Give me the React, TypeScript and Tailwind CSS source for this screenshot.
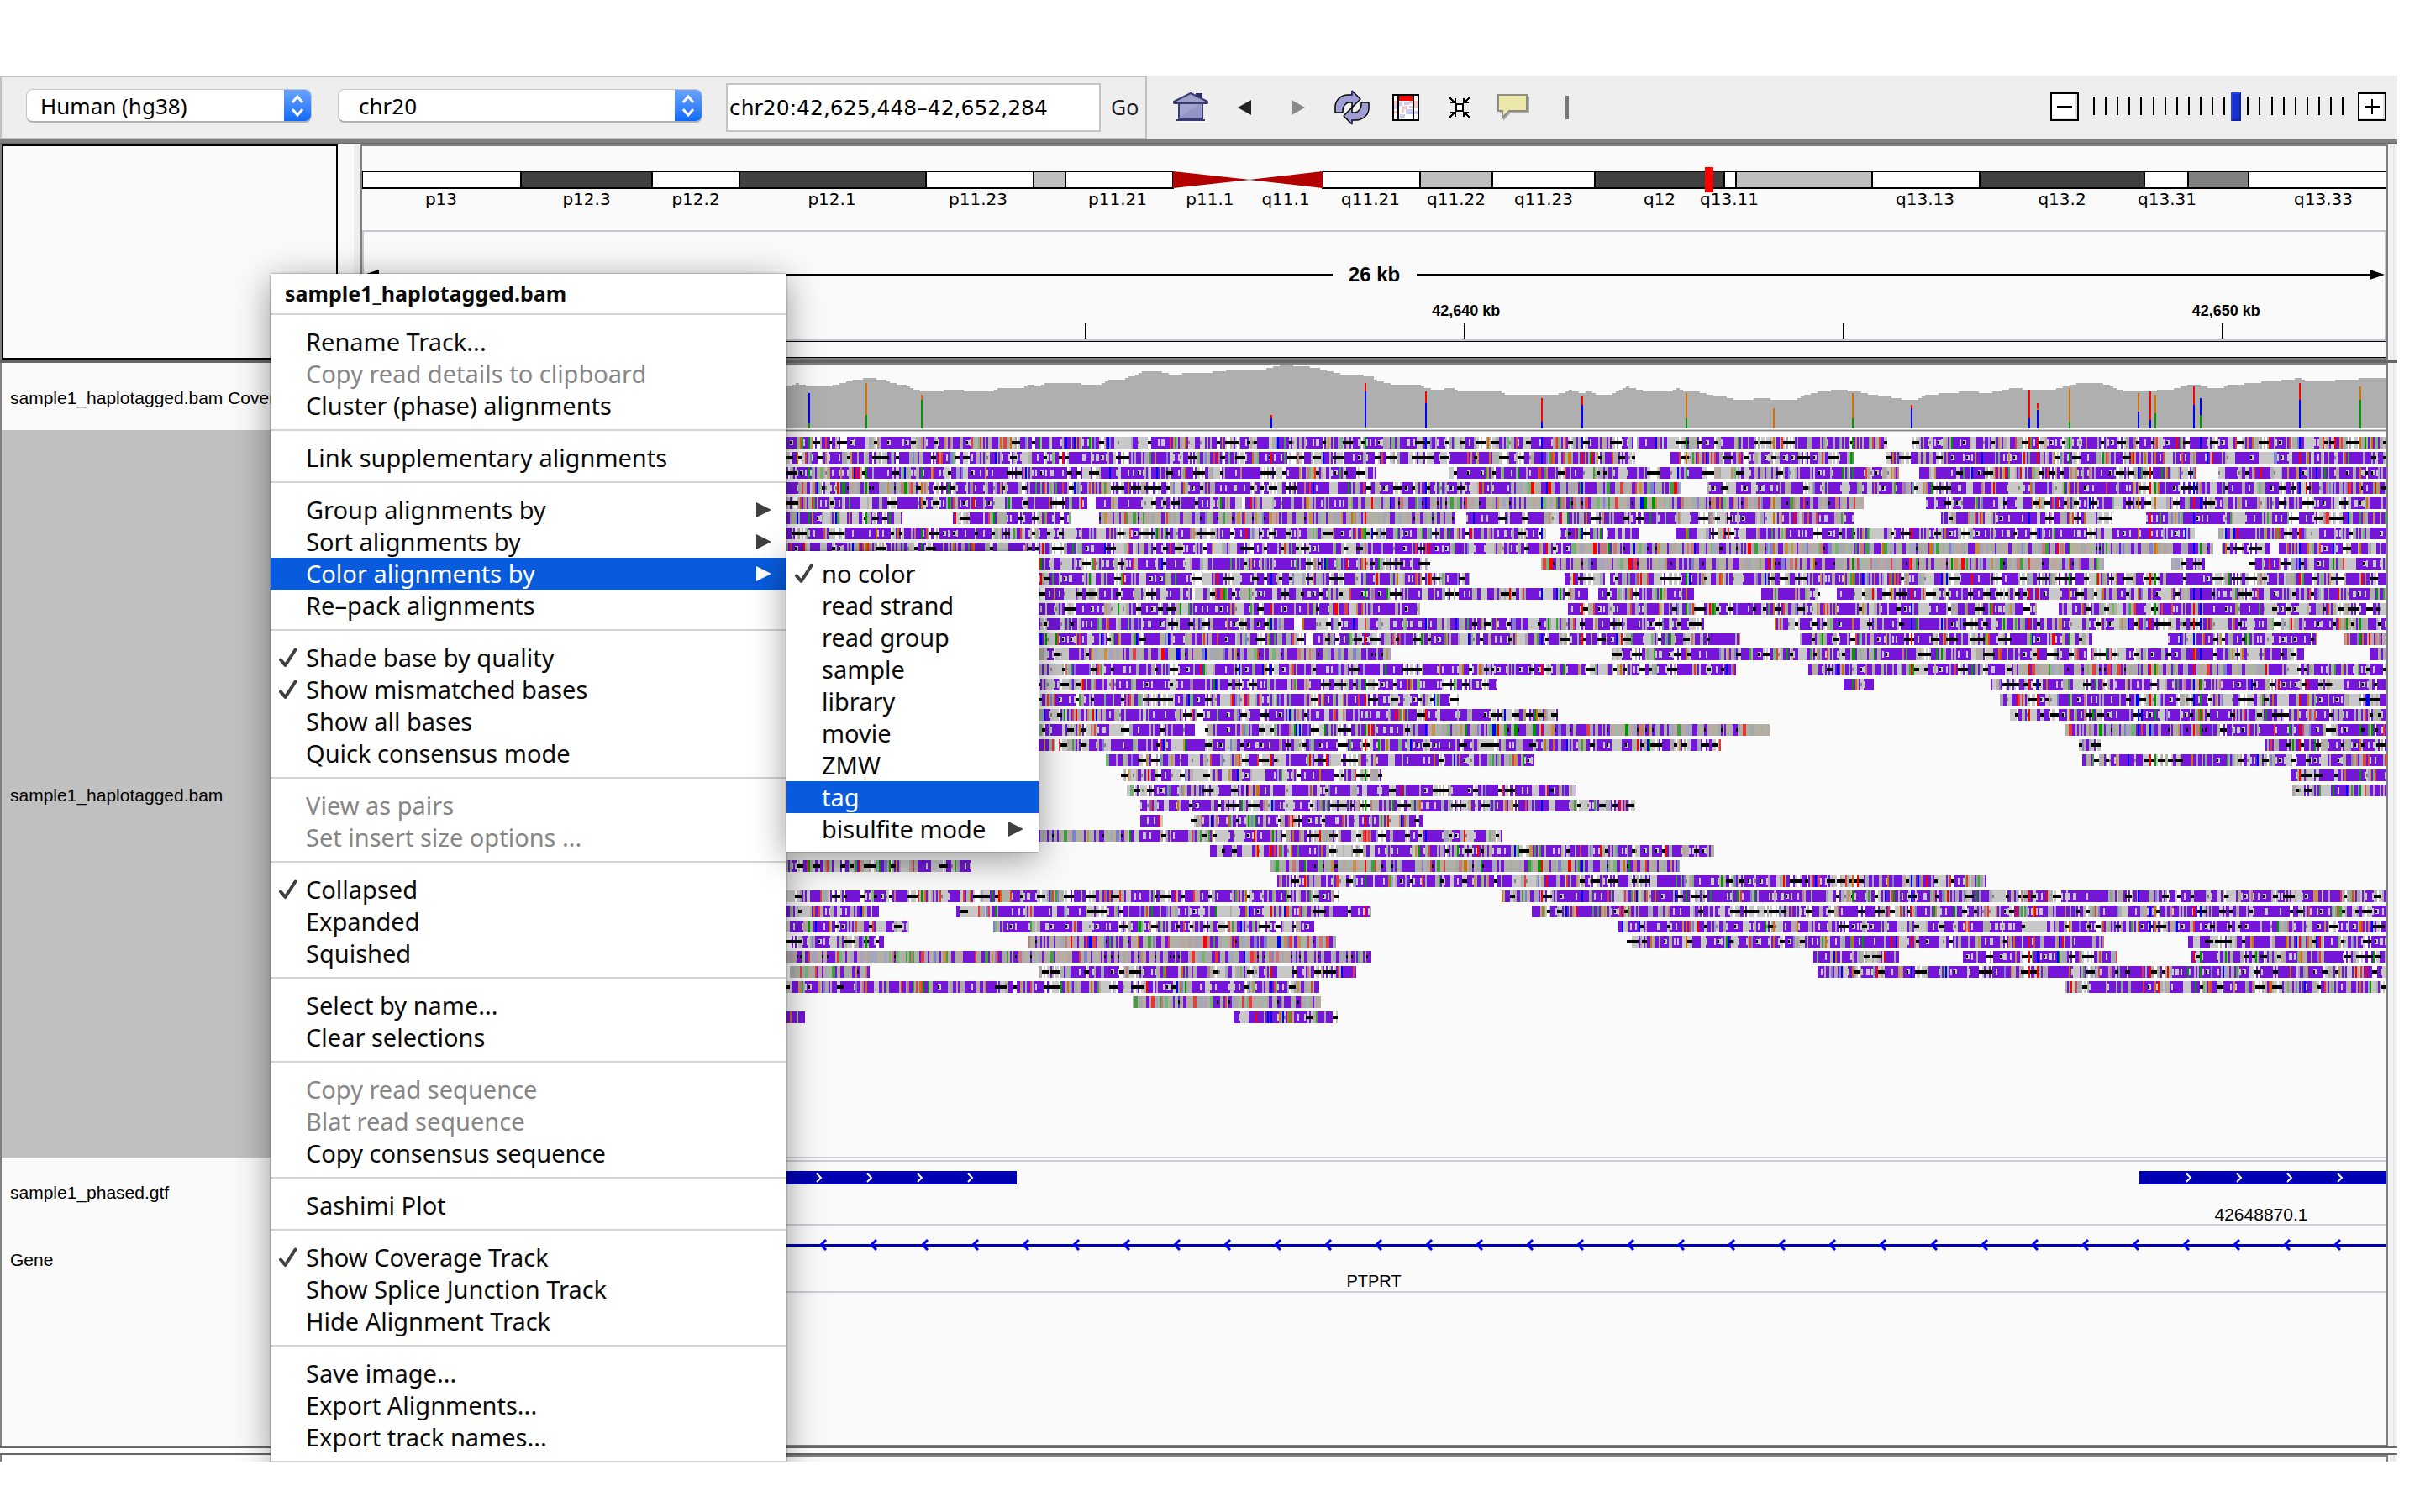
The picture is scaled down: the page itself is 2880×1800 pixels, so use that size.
import React from "react";

/* ---------- genome data ---------- */

const X0 = 431;
const SPAN = 2409;
const pct = (x: number) => `${((x - X0) / SPAN) * 100}%`;

const BANDS: [number, number, string][] = [
  [431, 620, "#fff"], [620, 776, "#404040"], [776, 880, "#fff"], [880, 1102, "#404040"],
  [1102, 1230, "#fff"], [1230, 1268, "#bfbfbf"], [1268, 1396, "#fff"],
  [1574, 1690, "#fff"], [1690, 1776, "#bfbfbf"], [1776, 1898, "#fff"], [1898, 2052, "#404040"],
  [2052, 2066, "#fff"], [2066, 2228, "#bfbfbf"], [2228, 2356, "#fff"], [2356, 2552, "#404040"],
  [2552, 2604, "#fff"], [2604, 2676, "#808080"], [2676, 2842, "#fff"],
];

const BAND_LABELS: [string, number][] = [
  ["p13", 525], ["p12.3", 698], ["p12.2", 828], ["p12.1", 990], ["p11.23", 1164], ["p11.21", 1330],
  ["p11.1", 1440], ["q11.1", 1530], ["q11.21", 1631], ["q11.22", 1733], ["q11.23", 1837], ["q12", 1975],
  ["q13.11", 2058], ["q13.13", 2291], ["q13.2", 2454], ["q13.31", 2579], ["q13.33", 2765],
];

const COVERAGE: [number, number][] = [
  [431, 462], [936, 460], [948, 456], [958, 460], [984, 460], [1004, 455], [1016, 452], [1036, 450],
  [1052, 453], [1060, 456], [1076, 459], [1087, 464], [1102, 466], [1140, 464], [1152, 466], [1180, 466],
  [1184, 462], [1216, 461], [1225, 458], [1232, 460], [1250, 455], [1276, 455], [1288, 458], [1306, 458],
  [1316, 453], [1332, 452], [1342, 449], [1350, 447], [1360, 442], [1380, 443], [1392, 446], [1418, 444],
  [1440, 443], [1464, 440], [1480, 439], [1500, 440], [1512, 437], [1524, 434], [1550, 436], [1565, 438],
  [1580, 442], [1594, 445], [1612, 446], [1632, 448], [1636, 452], [1644, 455], [1656, 458], [1690, 459],
  [1702, 464], [1730, 462], [1734, 466], [1786, 467], [1790, 470], [1820, 469], [1850, 470], [1862, 466],
  [1868, 464], [1880, 468], [1890, 466], [1902, 470], [1915, 470], [1925, 464], [1935, 460], [1945, 463],
  [1960, 466], [1990, 465], [1996, 462], [2000, 465], [2020, 466], [2030, 470], [2048, 472], [2066, 476],
  [2100, 474], [2110, 476], [2135, 476], [2142, 472], [2160, 467], [2188, 464], [2208, 466], [2225, 470],
  [2240, 472], [2262, 475], [2280, 475], [2290, 471], [2315, 468], [2340, 466], [2366, 468], [2380, 465],
  [2396, 462], [2418, 464], [2440, 464], [2460, 459], [2476, 455], [2500, 456], [2515, 462], [2530, 466],
  [2555, 466], [2585, 463], [2600, 459], [2612, 457], [2625, 461], [2640, 463], [2650, 459], [2680, 456],
  [2700, 454], [2728, 452], [2732, 450], [2750, 455], [2765, 454], [2790, 452], [2820, 450], [2840, 450],
];

const R = "#ff0000";
const B = "#0000ff";
const O = "#d17105";
const G = "#009600";

/* x, then stacked [top, colour] pieces down to the baseline */
const SNPS: [number, [number, string][]][] = [
  [963, [[468, B], [504, G]]], [1031, [[456, O], [494, G]]], [1097, [[470, O], [476, G]]],
  [1513, [[494, R], [498, B]]], [1625, [[456, R], [466, B], [508, G]]], [1697, [[466, R], [480, B]]],
  [1835, [[474, R], [502, B]]], [1883, [[472, R], [482, B]]], [2007, [[468, O], [498, G]]],
  [2111, [[486, O]]], [2205, [[468, O], [498, G]]], [2275, [[482, R], [486, B]]],
  [2415, [[464, R], [498, B]]], [2425, [[480, R], [486, O], [488, B]]], [2463, [[462, O], [502, G]]],
  [2545, [[468, O], [490, B]]], [2559, [[466, R], [500, B]]], [2565, [[470, O], [492, G]]],
  [2611, [[460, R], [482, B]]], [2619, [[474, B], [494, G]]], [2737, [[456, R], [476, B]]],
  [2809, [[460, O], [476, G]]],
];

/* reads per packed row: [start, end, muted?] */
type Seg = [number, number, 1?];
const ROWS: Seg[][] = [
  [[936, 1944], [1948, 2246], [2276, 2840]],
  [[936, 1946], [1988, 2206], [2244, 2840]],
  [[936, 1638], [1724, 2260], [2284, 2614], [2640, 2840]],
  [[936, 1000], [1000, 1090, 1], [1090, 1800], [1800, 2000, 1], [2032, 2840]],
  [[936, 1294], [1304, 1478], [1482, 1600], [1600, 2218, 1], [2292, 2840]],
  [[936, 1074], [1134, 1274], [1308, 1732, 1], [1745, 2206], [2310, 2514], [2554, 2840]],
  [[936, 1840], [1856, 1908], [1912, 1950], [1994, 2612], [2640, 2840]],
  [[936, 1872], [1872, 2634, 1], [2644, 2702], [2712, 2840]],
  [[936, 1702], [1834, 2504, 1], [2584, 2624], [2676, 2840]],
  [[936, 1749], [1862, 1910], [1916, 2840]],
  [[936, 1418], [1422, 1890], [1902, 2016], [2096, 2166], [2186, 2840]],
  [[936, 1690], [1866, 2424], [2450, 2840]],
  [[936, 1540], [1550, 2028], [2112, 2840]],
  [[936, 1553], [1563, 2070], [2142, 2490], [2580, 2757], [2789, 2840]],
  [[936, 1300], [1300, 1656, 1], [1918, 2484], [2488, 2742], [2820, 2840]],
  [[936, 2066], [2152, 2400], [2400, 2700, 1], [2700, 2840]],
  [[936, 1782], [2194, 2230], [2369, 2840]],
  [[936, 1736], [2380, 2840]],
  [[936, 1854], [2392, 2840]],
  [[936, 1422], [1434, 1700], [1700, 2106, 1], [2458, 2640, 1], [2640, 2840]],
  [[936, 1256], [1260, 2048], [2474, 2500], [2696, 2840]],
  [[1316, 1826], [2478, 2840]],
  [[1334, 1645], [2726, 2840]],
  [[1341, 1876], [2728, 2840]],
  [[1357, 1946]],
  [[1357, 1384], [1417, 1694]],
  [[936, 1340, 1], [1340, 1788]],
  [[1440, 2040]],
  [[936, 1156], [1512, 1999, 1]],
  [[1520, 2364]],
  [[936, 1594], [1787, 2840]],
  [[936, 1046], [1138, 1632], [1823, 2840]],
  [[936, 1082], [1182, 1564], [1926, 2840]],
  [[936, 1052], [1224, 1590, 1], [1936, 2504], [2604, 2840]],
  [[936, 1632, 1], [2158, 2260], [2336, 2520], [2608, 2840]],
  [[940, 1035, 1], [1236, 1614], [2163, 2840]],
  [[936, 1570], [2458, 2840]],
  [[1348, 1572, 1]],
  [[936, 958], [1468, 1592]],
];

const ROW_TOP = 520;
const ROW_STEP = 18;
const ROW_H = 14;

const PURPLE = "#7415d8";
const GRAY = "#c8c8c8";
const SOFT = ["#a8b5a6", "#bba5a5", "#a5a5bf", "#b8aea0", "#b0b0a8", "#a8a8a8"];
const MID = ["#c87878", "#78b478", "#8080d0", "#c88f4a", "#e04040", "#40a040"];
const HOT = [R, G, B, O, "#ee3333"];

function buildReads(): [string, string][] {
  let s = 20426;
  const rnd = () => {
    s = (s * 1664525 + 1013904223) % 4294967296;
    return s / 4294967296;
  };
  const pick = (a: string[]) => a[Math.floor(rnd() * a.length)];
  const under: Record<string, string> = {};
  const over: Record<string, string> = {};
  const put = (m: Record<string, string>, c: string, x: number, y: number, w: number, h: number) => {
    m[c] = (m[c] || "") + `M${x} ${y}h${w}v${h}h${-w}z`;
  };
  ROWS.forEach((segs, r) => {
    const y = ROW_TOP + r * ROW_STEP;
    segs.forEach(([a, b, muted]) => {
      let x = a;
      while (x < b) {
        const k = rnd();
        const left = b - x;
        if (muted) {
          const w = Math.min(left, k < 0.6 ? 2 : 4);
          const q = rnd();
          put(under, q < 0.28 ? PURPLE : q < 0.84 ? pick(SOFT) : q < 0.97 ? pick(MID) : pick(HOT), x, y, w, ROW_H);
          if (q < 0.06) put(over, "#000", x, y + 5, 2, 4);
          x += w;
          continue;
        }
        if (k < 0.32) {
          const w = Math.min(left, 4 + 2 * Math.floor(rnd() * rnd() * 7));
          put(under, PURPLE, x, y, w, ROW_H);
          if (w >= 6) {
            if (rnd() < 0.5) put(over, GRAY, x, y + 3, 2, 8);
            if (rnd() < 0.5) put(over, GRAY, x + w - 2, y + 3, 2, 8);
          }
          if (w >= 10 && rnd() < 0.5) {
            const c = x + 4;
            put(over, GRAY, c, y + 4, 4, 6);
            put(over, "#000", c, y + 5, 2, 4);
          }
          x += w;
        } else if (k < 0.48) {
          const w = Math.min(left, 4 + 2 * Math.floor(rnd() * rnd() * 7));
          for (let i = 0; i < w; i += 2) {
            const q = rnd();
            put(under, q < 0.4 ? GRAY : q < 0.55 ? PURPLE : q < 0.65 ? pick(SOFT) : "#ffffff", x + i, y, 2, ROW_H);
          }
          put(over, "#000", x, y + 5, w, 4);
          x += w;
        } else if (k < 0.59) {
          const w = Math.min(left, 2 + 2 * Math.floor(rnd() * rnd() * 7));
          put(under, GRAY, x, y, w, ROW_H);
          if (rnd() < 0.3) put(over, "#808080", x, y + 5, 2, 4);
          x += w;
        } else {
          const n = 1 + Math.floor(rnd() * 4);
          for (let i = 0; i < n && x < b; i++) {
            const q = rnd();
            put(under, q < 0.36 ? PURPLE : q < 0.76 ? pick(SOFT) : q < 0.92 ? pick(MID) : pick(HOT), x, y, 2, ROW_H);
            x += 2;
          }
        }
      }
      SNPS.forEach(([sx, parts]) => {
        if (sx > a + 2 && sx < b - 2 && rnd() < 0.45) {
          put(over, parts[rnd() < 0.5 ? 0 : parts.length - 1][1], sx - 1, y, 2, ROW_H);
        }
      });
    });
  });
  return [...Object.entries(under), ...Object.entries(over)];
}

const READS = buildReads();

function coveragePath() {
  let d = `M431 510`;
  let i = 0;
  for (let x = 431; x < 2840; x += 4) {
    while (i < COVERAGE.length - 2 && COVERAGE[i + 1][0] <= x) i++;
    const [xa, ya] = COVERAGE[i];
    const [xb, yb] = COVERAGE[i + 1];
    const t = Math.min(1, Math.max(0, (x - xa) / (xb - xa)));
    const yy = 2 * Math.round((ya + (yb - ya) * t) / 2);
    d += `V${yy}H${Math.min(2840, x + 4)}`;
  }
  return d + "V510Z";
}

const series = (from: number, to: number, step: number) => {
  const out: number[] = [];
  for (let x = from; x <= to; x += step) out.push(x);
  return out;
};

/* ---------- icons ---------- */

function HomeIcon() {
  return (
    <svg width="44" height="38" viewBox="0 0 44 38" aria-hidden="true">
      <path d="M28 2h8v12l-8-5z" fill="#2d2d66" />
      <path d="M8 14h28v18H8z" fill="#a3a3cf" stroke="#3a3a74" strokeWidth="2" />
      <path d="M10 30 34 14v18H10z" fill="#8a8abb" opacity=".5" />
      <path d="M2 12 22 2l20 10v2H2z" fill="#a0a0cc" stroke="#3a3a74" strokeWidth="2" strokeLinejoin="bevel" />
      <path d="M5 34h34" stroke="#3a3a74" strokeWidth="2" />
      <path d="M7 36.500h36" stroke="#fff" strokeWidth="1" />
    </svg>
  );
}

function RefreshIcon() {
  const half =
    "M1 27V19C2 11 9 6 16 6h5V1l10 10-10 10v-6h-4c-4 1-7 5-7 9v3z";
  return (
    <svg width="42" height="42" viewBox="0 0 42 42" aria-hidden="true">
      <g fill="#9f9fd6" stroke="#000" strokeWidth="1.500" strokeLinejoin="bevel">
        <path d={half} />
        <path d={half} transform="rotate(180 21 21)" />
      </g>
      <path d="M21 1v6M21 35v6" stroke="#2d2d7a" strokeWidth="2" />
    </svg>
  );
}

function RegionIcon() {
  return (
    <svg width="32" height="32" viewBox="0 0 32 32" shapeRendering="crispEdges" aria-hidden="true">
      <path d="M1 1h30v30H1z" fill="#fff" />
      <path d="M2 8h4v6H2zM12 14h6v4h-4v4h-3zM20 8h4v4h-4zM26 8h4v8h-4zM2 20h4v3H2z" fill="#f7c8c8" />
      <path d="M8 10h4v4H8zM14 10h6v3h-6zM16 18h8v6h-8zM2 14h4v4H2zM26 20h4v4h-4zM9 24h6v4H9zM20 14h4v3h-4z" fill="#c8ccf5" />
      <path d="M8 2h16v6H8z" fill="#f00" />
      <path d="M1 1h30v30H1zM7 1v30M25 1v30" fill="none" stroke="#000" strokeWidth="2" />
    </svg>
  );
}

function FitIcon() {
  return (
    <svg width="26" height="26" viewBox="0 0 26 26" shapeRendering="crispEdges" aria-hidden="true">
      <path d="M9 9h8v8H9z" fill="#fff" stroke="#000" strokeWidth="2" />
      <path
        d="M0 0l7 7M26 0l-7 7M0 26l7-7M26 26l-7-7M2 7h6V2M24 7h-6V2M2 19h6v5M24 19h-6v5"
        fill="none"
        stroke="#000"
        strokeWidth="2"
      />
    </svg>
  );
}

function BubbleIcon() {
  return (
    <svg width="38" height="32" viewBox="0 0 38 32" aria-hidden="true">
      <path d="M3 3h35v19H16L7 32V22H3z" fill="#aaa" />
      <path d="M1 1h34v19H14l-8 8v-8H1z" fill="#ebe7a9" stroke="#8c8c82" strokeWidth="2" />
    </svg>
  );
}

function Check() {
  return (
    <svg width="22" height="24" viewBox="0 0 22 24" aria-hidden="true">
      <path d="M2 14.500 7.500 21 19.500 2.500" fill="none" stroke="#404040" strokeWidth="4" strokeLinecap="round" strokeLinejoin="round" />
    </svg>
  );
}

function SubArrow() {
  return (
    <svg width="18" height="20" viewBox="0 0 18 20" aria-hidden="true">
      <path d="M0 1v18l18-9z" fill="currentColor" />
    </svg>
  );
}

/* ---------- toolbar ---------- */

function Picker({ label, value, className, inset }: { label: string; value: string; className: string; inset: string }) {
  return (
    <div className={`relative mb-1 h-10 shrink-0 overflow-hidden rounded-lg border border-b-2 border-[#c6c6c6] border-b-[#b0b0b0] bg-white ${className}`}>
      <select aria-label={label} className={`h-full w-full appearance-none bg-transparent text-[26px] leading-9 text-black outline-none ${inset}`}>
        <option>{value}</option>
      </select>
      <span className="pointer-events-none absolute -inset-y-px right-0 flex w-8 items-center justify-center bg-gradient-to-b from-[#6ba5fb] to-[#0468fd]">
        <svg width="16" height="26" viewBox="0 0 16 26" aria-hidden="true">
          <path d="M2 9l6-7 6 7M2 17l6 7 6-7" fill="none" stroke="#fff" strokeWidth="3" />
        </svg>
      </span>
    </div>
  );
}

function Slot({ label, children }: { label: string; children: React.ReactNode }) {
  return (
    <button type="button" aria-label={label} className="flex h-full w-16 items-center justify-center">
      {children}
    </button>
  );
}

function Toolbar() {
  return (
    <header className="flex h-[76px] shrink-0 items-stretch bg-[#eeeeee]">
      <form className="flex items-center border-2 border-[#c0c0c0] pl-[29px] pr-2" onSubmit={(e) => e.preventDefault()}>
        <Picker label="Genome" value="Human (hg38)" className="w-[340px]" inset="pl-4" />
        <Picker label="Chromosome" value="chr20" className="ml-[31px] w-[434px]" inset="pl-6" />
        <input
          aria-label="Locus"
          defaultValue="chr20:42,625,448–42,652,284"
          className="ml-7 h-[58px] w-[446px] border-2 border-[#c4c4c4] bg-white px-0.5 font-['DejaVu_Sans'] text-[25px] text-black outline-none"
        />
        <button type="button" className="ml-3 text-[25px] text-[#222]">Go</button>
      </form>
      <div className="ml-5 flex items-center">
        <Slot label="Home"><HomeIcon /></Slot>
        <Slot label="Back">
          <svg width="16" height="18" viewBox="0 0 16 18"><path d="M16 0v18L0 9z" fill="#222" /></svg>
        </Slot>
        <Slot label="Forward">
          <svg width="16" height="18" viewBox="0 0 16 18"><path d="M0 0v18l16-9z" fill="#888" /></svg>
        </Slot>
        <Slot label="Refresh"><RefreshIcon /></Slot>
        <Slot label="Define region"><RegionIcon /></Slot>
        <Slot label="Fit to window"><FitIcon /></Slot>
        <Slot label="Popup behavior"><BubbleIcon /></Slot>
        <span className="flex w-16 justify-center"><span className="h-7 w-1 bg-[#777]" /></span>
      </div>
      <div className="ml-auto flex items-start gap-3 pr-[13px] pt-5">
        <button type="button" aria-label="Zoom out" className="flex size-[34px] items-center justify-center border-2 border-black bg-white shadow-[inset_-2px_-2px_0_#ddd]">
          <span className="h-0.5 w-[18px] bg-black" />
        </button>
        <div className="relative h-[34px] w-[308px]">
          <svg className="h-full w-full" viewBox="0 0 308 34" preserveAspectRatio="none" shapeRendering="crispEdges" aria-hidden="true">
            {series(0, 21, 1).map((i) => (
              <path key={i} d={`M${6 + Math.round(i * 14.1)} 5v22`} stroke="#000" strokeWidth="2" />
            ))}
          </svg>
          <input
            type="range"
            aria-label="Zoom level"
            min={0}
            max={21}
            defaultValue={12}
            className="absolute inset-0 m-0 h-full w-full appearance-none bg-transparent [&::-webkit-slider-thumb]:h-[34px] [&::-webkit-slider-thumb]:w-3 [&::-webkit-slider-thumb]:appearance-none [&::-webkit-slider-thumb]:border-2 [&::-webkit-slider-thumb]:border-[#2244ee] [&::-webkit-slider-thumb]:border-b-[#1122a0] [&::-webkit-slider-thumb]:border-r-[#1122a0] [&::-webkit-slider-thumb]:bg-[#1a30cc]"
          />
        </div>
        <button type="button" aria-label="Zoom in" className="flex size-[34px] items-center justify-center border-2 border-black bg-white shadow-[inset_-2px_-2px_0_#ddd]">
          <svg width="18" height="18" viewBox="0 0 18 18" aria-hidden="true"><path d="M0 9h18M9 0v18" stroke="#000" strokeWidth="2" /></svg>
        </button>
      </div>
    </header>
  );
}

/* ---------- header panel ---------- */

function Ideogram() {
  return (
    <div className="relative h-[100px]">
      <svg className="h-full w-full" viewBox={`${X0} 174 ${SPAN} 100`} preserveAspectRatio="none" aria-hidden="true">
        <g shapeRendering="crispEdges">
          {BANDS.map(([a, b, c]) => (
            <rect key={a} x={a} y="204" width={b - a} height="20" fill={c} stroke="#000" strokeWidth="2" />
          ))}
        </g>
        <path d="M1396 204l92 10-92 10zM1574 204l-88 10 88 10z" fill="#b20000" />
        <rect x="2029" y="199" width="10" height="30" fill="#f00" />
      </svg>
      {BAND_LABELS.map(([t, x]) => (
        <span key={t} className="absolute top-[51px] -translate-x-1/2 font-['DejaVu_Sans'] text-[20px] leading-6" style={{ left: pct(x) }}>
          {t}
        </span>
      ))}
    </div>
  );
}

function Ruler() {
  return (
    <div className="relative h-[132px] border-2 border-[#c8c8d2] font-['Liberation_Sans'] font-bold">
      <div className="flex h-[102px] items-center">
        <svg width="18" height="12" viewBox="0 0 18 12" className="shrink-0"><path d="M18 0v12L0 6z" /></svg>
        <span className="h-0.5 flex-1 bg-black" />
        <span className="w-[100px] text-center text-[24px] leading-7">26 kb</span>
        <span className="h-0.5 flex-1 bg-black" />
        <svg width="18" height="12" viewBox="0 0 18 12" className="shrink-0"><path d="M0 0v12l18-6z" /></svg>
      </div>
      {[840, 1292, 1744, 2196, 2648].map((x) => (
        <span key={x} className="absolute top-[109px] -ml-0.5 h-[18px] w-0.5 bg-black" style={{ left: pct(x) }} />
      ))}
      {([["42,640 kb", 1745], ["42,650 kb", 2651]] as [string, number][]).map(([t, x]) => (
        <span key={t} className="absolute top-[84px] -translate-x-1/2 text-[18px] leading-5" style={{ left: pct(x) }}>
          {t}
        </span>
      ))}
    </div>
  );
}

function Gutter() {
  return <div className="w-[27px] shrink-0 border-r-8 border-[#eeeeee] bg-[#fafafa]" />;
}

function Edge() {
  return (
    <div className="flex w-[11px] shrink-0 bg-[#f3f3f3]">
      <span className="ml-1.5 w-0.5 bg-[#e6e6e6]" />
    </div>
  );
}

/* ---------- tracks ---------- */

function TrackName({ children, className }: { children: React.ReactNode; className: string }) {
  return (
    <div className={`flex shrink-0 items-center overflow-hidden whitespace-nowrap pl-2.5 pt-1 font-['Liberation_Sans'] text-[21px] leading-6 ${className}`}>
      {children}
    </div>
  );
}

function Tracks() {
  return (
    <div className="min-w-0 flex-1 border-2 border-[#808080] bg-[#fafafa]">
      <svg className="block h-20 w-full" viewBox={`${X0} 434 ${SPAN} 80`} preserveAspectRatio="none" shapeRendering="crispEdges" role="img" aria-label="Coverage">
        <path d={coveragePath()} fill="#afafaf" />
        {SNPS.map(([x, parts]) =>
          parts.map(([top, c], i) => (
            <rect key={`${x}-${i}`} x={x - 1} y={top} width="2" height={(parts[i + 1]?.[0] ?? 510) - top} fill={c} />
          )),
        )}
        <path d="M431 511.500H2840M431 513.500H2840" stroke="#cdcdcd" />
        <path d="M431 512.500H2840" stroke="#808080" />
      </svg>
      <div className="h-[865px] border-b-2 border-[#cdcdd6]">
        <svg className="block h-full w-full" viewBox={`${X0} 514 ${SPAN} 863`} preserveAspectRatio="none" shapeRendering="crispEdges" role="img" aria-label="Alignments">
          {READS.map(([c, d], i) => (
            <path key={i} d={d} fill={c} />
          ))}
        </svg>
      </div>
      <div className="relative mt-0.5 h-[78px] border-y-2 border-[#cdcdd6]">
        <svg className="block h-full w-full" viewBox={`${X0} 1383 ${SPAN} 74`} preserveAspectRatio="none" aria-hidden="true">
          <path d="M431 1394H1210V1410H431zM2546 1394H2840V1410H2546z" fill="#0000b2" />
          {[...series(495, 1195, 60), ...series(2605, 2800, 60)].map((x) => (
            <path key={x} d={`M${x - 3} 1397l5 5-5 5`} fill="none" stroke="#fff" strokeWidth="2" />
          ))}
        </svg>
        <span className="absolute top-[51px] -translate-x-1/2 font-['Liberation_Sans'] text-[21px] leading-6" style={{ left: pct(2691) }}>
          42648870.1
        </span>
      </div>
      <div className="relative h-20 border-b-2 border-[#cdcdd6]">
        <svg className="block h-full w-full" viewBox={`${X0} 1459 ${SPAN} 78`} preserveAspectRatio="none" aria-hidden="true">
          <path d="M431 1482.500H2840" stroke="#0000b2" strokeWidth="3" />
          {series(500, 2830, 60).map((x, i) => (
            <path key={x} d={`M${x + 3 + Math.round(i / 20)} 1476l-6 6 6 6`} fill="none" stroke="#0000ff" strokeWidth="3" />
          ))}
        </svg>
        <span className="absolute top-[54px] -translate-x-1/2 font-['Liberation_Sans'] text-[20px] leading-6" style={{ left: pct(1635) }}>
          PTPRT
        </span>
      </div>
    </div>
  );
}

/* ---------- menus ---------- */

type Entry = { t: string; off?: boolean; check?: boolean; sub?: boolean; on?: boolean };

const MENU: Entry[][] = [
  [{ t: "Rename Track..." }, { t: "Copy read details to clipboard", off: true }, { t: "Cluster (phase) alignments" }],
  [{ t: "Link supplementary alignments" }],
  [
    { t: "Group alignments by", sub: true },
    { t: "Sort alignments by", sub: true },
    { t: "Color alignments by", sub: true, on: true },
    { t: "Re–pack alignments" },
  ],
  [
    { t: "Shade base by quality", check: true },
    { t: "Show mismatched bases", check: true },
    { t: "Show all bases" },
    { t: "Quick consensus mode" },
  ],
  [{ t: "View as pairs", off: true }, { t: "Set insert size options ...", off: true }],
  [{ t: "Collapsed", check: true }, { t: "Expanded" }, { t: "Squished" }],
  [{ t: "Select by name..." }, { t: "Clear selections" }],
  [{ t: "Copy read sequence", off: true }, { t: "Blat read sequence", off: true }, { t: "Copy consensus sequence" }],
  [{ t: "Sashimi Plot" }],
  [{ t: "Show Coverage Track", check: true }, { t: "Show Splice Junction Track" }, { t: "Hide Alignment Track" }],
  [{ t: "Save image..." }, { t: "Export Alignments..." }, { t: "Export track names..." }],
];

const COLOR_BY: Entry[] = [
  { t: "no color", check: true },
  { t: "read strand" },
  { t: "read group" },
  { t: "sample" },
  { t: "library" },
  { t: "movie" },
  { t: "ZMW" },
  { t: "tag", on: true },
  { t: "bisulfite mode", sub: true },
];

function Item({ e }: { e: Entry }) {
  const tone = e.on ? "bg-[#085bdc] text-white" : e.off ? "text-[#868686]" : "text-[#0a0a0a]";
  return (
    <button
      type="button"
      role={e.check ? "menuitemcheckbox" : "menuitem"}
      aria-checked={e.check ? true : undefined}
      disabled={e.off}
      className={`flex h-[38px] w-full items-center whitespace-nowrap pl-2.5 pr-[18px] text-left text-[29px] leading-[38px] ${tone}`}
    >
      <span className="w-8 shrink-0">{e.check && <Check />}</span>
      <span className="flex-1">{e.t}</span>
      {e.sub && <span className={e.on ? "text-white" : "text-[#404040]"}><SubArrow /></span>}
    </button>
  );
}

function ContextMenu() {
  return (
    <div role="menu" aria-label="sample1_haplotagged.bam" className="absolute left-[322px] top-[236px] w-[614px] bg-white shadow-[0_8px_40px_rgba(0,0,0,0.4),0_0_2px_rgba(0,0,0,0.5)]">
      <div className="h-[47px] pl-[17px] text-[25px] font-bold leading-[46px] text-[#0a0a0a]">sample1_haplotagged.bam</div>
      {MENU.map((group, i) => (
        <div key={i} role="group" className="mb-[9px] border-t-2 border-[#d4d4d4] pt-[13px]">
          {group.map((e) => (
            <Item key={e.t} e={e} />
          ))}
        </div>
      ))}
      <div className="border-t-2 border-[#d4d4d4]" />
    </div>
  );
}

function SubMenu() {
  return (
    <div role="menu" aria-label="Color alignments by" className="absolute left-[936px] top-[566px] w-[300px] bg-white py-2 shadow-[0_8px_40px_rgba(0,0,0,0.4),0_0_2px_rgba(0,0,0,0.5)]">
      {COLOR_BY.map((e) => (
        <Item key={e.t} e={e} />
      ))}
    </div>
  );
}

/* ---------- page ---------- */

export default function App() {
  return (
    <div className="flex min-h-screen w-full flex-col bg-white pb-[60px] pr-[27px] pt-[90px] font-['Noto_Sans',sans-serif] text-black">
      <main className="relative flex flex-1 flex-col overflow-hidden">
        <Toolbar />
        <div className="h-1.5 shrink-0 border-b-2 border-[#666] bg-[#808080]" />

        <section className="flex shrink-0 bg-[#fafafa]" aria-label="Genome header">
          <div className="w-[402px] shrink-0 border-l-2 border-[#808080]">
            <div className="h-full border-2 border-black bg-[#fafafa]" />
          </div>
          <Gutter />
          <div className="min-w-0 flex-1 border-2 border-[#808080]">
            <Ideogram />
            <Ruler />
            <div className="h-5 border border-l-0 border-black" />
          </div>
          <Edge />
        </section>
        <div className="h-1 shrink-0 bg-[#666]" />

        <section className="flex flex-1 border-b-2 border-[#666]" aria-label="Tracks">
          <div className="w-[402px] shrink-0 border-l-2 border-[#808080] bg-[#fafafa]">
            <TrackName className="h-20">sample1_haplotagged.bam Coverage</TrackName>
            <TrackName className="h-[866px] bg-[#c0c0c0]">sample1_haplotagged.bam</TrackName>
            <TrackName className="h-20">sample1_phased.gtf</TrackName>
            <TrackName className="h-20">Gene</TrackName>
          </div>
          <Gutter />
          <Tracks />
          <Edge />
        </section>
        <div className="h-1.5 shrink-0" />
        <div className="flex h-2.5 shrink-0 border-t-2 border-[#666]">
          <div className="w-[402px] border-l-2 border-[#808080]" />
          <Gutter />
          <div className="flex-1 border-x-2 border-t-2 border-[#808080] bg-[#fafafa]" />
          <Edge />
        </div>

        <ContextMenu />
        <SubMenu />
      </main>
    </div>
  );
}
